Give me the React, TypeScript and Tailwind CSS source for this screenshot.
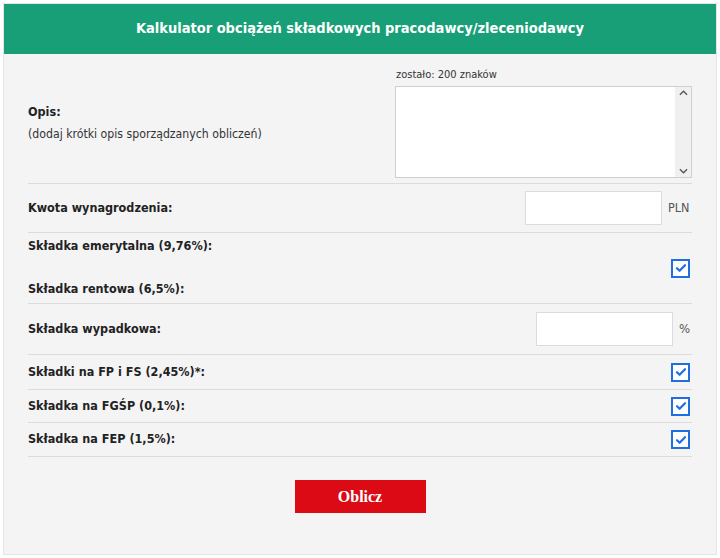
import { type ReactNode } from "react";

const baseFont = { fontFamily: '"DejaVu Sans Condensed", "DejaVu Sans", sans-serif' };

function Check() {
  return (
    <span className="flex h-[19px] w-[19px] items-center justify-center border-2 border-[#1f6fe0] bg-white">
      <svg viewBox="0 0 12 12" className="h-[12px] w-[12px]" fill="none" stroke="#1f6fe0" strokeWidth={2.2}>
        <path d="M2 6.2l2.6 2.6L10 3.2" strokeLinecap="round" strokeLinejoin="round" />
      </svg>
    </span>
  );
}

function Row({ children, className = "" }: { children: ReactNode; className?: string }) {
  return <div className={`flex items-center justify-between border-b border-[#dcdcdc] ${className}`}>{children}</div>;
}

function Label({ children }: { children: ReactNode }) {
  return <span className="whitespace-nowrap text-[12.5px] font-bold text-[#222]">{children}</span>;
}

export default function App() {
  return (
    <div className="min-h-[558px] bg-white p-[3px]" style={baseFont}>
      <div className="h-[552px] border border-[#e4e4e4] bg-[#f4f4f5]">
        <div className="flex h-[50px] items-center justify-center bg-[#189f77] text-[14.5px] font-bold text-white">
          Kalkulator obciążeń składkowych pracodawcy/zleceniodawcy
        </div>

        <div className="px-[24px]">
          <Row className="h-[130px]">
            <div className="flex flex-col gap-[3px] pt-[9px]">
              <Label>Opis:</Label>
              <span className="text-[12.2px] text-[#333]">(dodaj krótki opis sporządzanych obliczeń)</span>
            </div>
            <div className="flex flex-col self-start pt-[14px]">
              <span className="mb-[4px] pl-[1px] text-[11px] leading-[14px] text-[#333]">zostało: 200 znaków</span>
              <div className="flex h-[92px] w-[297px] border border-[#cfcfcf] bg-white">
                <textarea className="h-full flex-1 resize-none bg-white outline-none" />
                <div className="flex w-[16px] flex-col items-center justify-between bg-[#f0f0f0] py-[3px] text-[#555]">
                  <svg viewBox="0 0 10 6" className="h-[6px] w-[9px]" fill="none" stroke="currentColor" strokeWidth={1.5}>
                    <path d="M1 5l4-4 4 4" />
                  </svg>
                  <svg viewBox="0 0 10 6" className="h-[6px] w-[9px]" fill="none" stroke="currentColor" strokeWidth={1.5}>
                    <path d="M1 1l4 4 4-4" />
                  </svg>
                </div>
              </div>
            </div>
          </Row>

          <Row className="h-[49px]">
            <Label>Kwota wynagrodzenia:</Label>
            <div className="flex items-center gap-[6px]">
              <input className="h-[34px] w-[137px] border border-[#dcdcdc] bg-white outline-none" />
              <span className="w-[24px] text-[12.5px] text-[#555]">PLN</span>
            </div>
          </Row>

          <Row className="h-[71px]">
            <div className="flex flex-col gap-[24px]">
              <Label>Składka emerytalna (9,76%):</Label>
              <Label>Składka rentowa (6,5%):</Label>
            </div>
            <div className="pr-[2px]">
              <Check />
            </div>
          </Row>

          <Row className="h-[51px]">
            <Label>Składka wypadkowa:</Label>
            <div className="flex items-center gap-[6px]">
              <input className="h-[34px] w-[137px] border border-[#dcdcdc] bg-white outline-none" />
              <span className="w-[13px] text-[13px] text-[#555]">%</span>
            </div>
          </Row>

          <Row className="h-[35px]">
            <Label>Składki na FP i FS (2,45%)*:</Label>
            <div className="pr-[2px]">
              <Check />
            </div>
          </Row>

          <Row className="h-[33px]">
            <Label>Składka na FGŚP (0,1%):</Label>
            <div className="pr-[2px]">
              <Check />
            </div>
          </Row>

          <Row className="h-[34px]">
            <Label>Składka na FEP (1,5%):</Label>
            <div className="pr-[2px]">
              <Check />
            </div>
          </Row>

          <div className="flex justify-center pt-[23px]">
            <button
              className="h-[33px] w-[131px] bg-[#dc0a14] text-[16px] font-bold text-white"
              style={{ fontFamily: '"Liberation Serif", serif' }}
            >
              Oblicz
            </button>
          </div>
        </div>
      </div>
    </div>
  );
}
